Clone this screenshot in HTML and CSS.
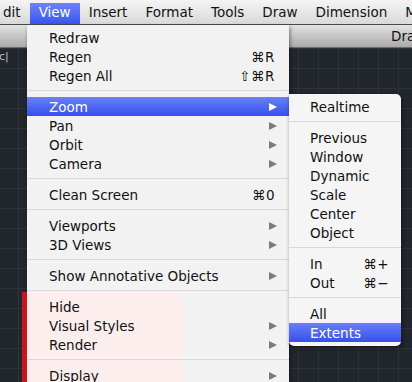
FILE: index.html
```html
<!DOCTYPE html>
<html lang="en">
<head>
    <meta charset="UTF-8">
    <meta name="viewport" content="width=device-width, initial-scale=1.0">
    <title>View Menu</title>
    <link rel="stylesheet" href="styles.css">
</head>
<body>
    <div class="menubar">
        <span class="mb-item first">dit</span>
        <span class="mb-item active">View</span>
        <span class="mb-item">Insert</span>
        <span class="mb-item">Format</span>
        <span class="mb-item">Tools</span>
        <span class="mb-item">Draw</span>
        <span class="mb-item">Dimension</span>
        <span class="mb-item">M</span>
    </div>
    <div class="titlebar"><span class="title">Dra</span></div>
    <div class="canvas"><span class="canvas-label">c|</span></div>

    <div class="menu main-menu">
        <div class="tint"></div>
        <div class="row">Redraw</div>
        <div class="row">Regen <span class="key">⌘R</span></div>
        <div class="row">Regen All <span class="key">⇧⌘R</span></div>
        <div class="sep"></div>
        <div class="row selected">Zoom <span class="arrow"></span></div>
        <div class="row">Pan <span class="arrow"></span></div>
        <div class="row">Orbit <span class="arrow"></span></div>
        <div class="row">Camera <span class="arrow"></span></div>
        <div class="sep"></div>
        <div class="row">Clean Screen <span class="key">⌘0</span></div>
        <div class="sep"></div>
        <div class="row">Viewports <span class="arrow"></span></div>
        <div class="row">3D Views <span class="arrow"></span></div>
        <div class="sep"></div>
        <div class="row">Show Annotative Objects <span class="arrow"></span></div>
        <div class="sep"></div>
        <div class="row">Hide</div>
        <div class="row">Visual Styles <span class="arrow"></span></div>
        <div class="row">Render <span class="arrow"></span></div>
        <div class="sep"></div>
        <div class="row">Display <span class="arrow"></span></div>
    </div>
    <div class="mark"></div>

    <div class="menu sub-menu">
        <div class="row">Realtime</div>
        <div class="sep"></div>
        <div class="row">Previous</div>
        <div class="row">Window</div>
        <div class="row">Dynamic</div>
        <div class="row">Scale</div>
        <div class="row">Center</div>
        <div class="row">Object</div>
        <div class="sep"></div>
        <div class="row">In <span class="key">⌘+</span></div>
        <div class="row">Out <span class="key">⌘−</span></div>
        <div class="sep"></div>
        <div class="row">All</div>
        <div class="row selected">Extents</div>
    </div>
</body>
</html>
```

FILE: styles.css
```css
body {
    margin: 0;
    width: 412px;
    height: 382px;
    overflow: hidden;
    position: relative;
    font-family: "DejaVu Sans", sans-serif;
    font-size: 13.5px;
    color: #111;
    background: #22262d;
}
.menubar {
    display: flex;
    height: 24px;
    align-items: stretch;
    white-space: nowrap;
    overflow: hidden;
    background: linear-gradient(#f4f4f4, #d9d9d9);
    border-bottom: 1px solid #4a4a4a;
}
.mb-item {
    display: flex;
    align-items: center;
    padding: 0 9px;
    margin-top: 3px;
    padding-bottom: 3px;
}
.mb-item.first {
    padding-left: 3px;
}
.mb-item.active {
    color: white;
    background: linear-gradient(#6d84f7, #3a55ee);
}
.titlebar {
    height: 22px;
    display: flex;
    align-items: center;
    padding-left: 391px;
    white-space: nowrap;
    background: linear-gradient(#e2e2e2, #aaaaaa);
    border-bottom: 1px solid #6b6b6b;
}
.canvas {
    height: 334px;
    background-color: #22262d;
    background-image:
        linear-gradient(90deg, rgba(255,255,255,0.05) 1px, transparent 1px),
        linear-gradient(rgba(255,255,255,0.05) 1px, transparent 1px);
    background-size: 20px 20px;
    background-position: 18px 0;
}
.canvas-label {
    display: block;
    color: #b8bcc4;
    font-size: 11px;
    padding-top: 2px;
    margin-left: -1px;
}
.menu {
    position: absolute;
    background: #f2f2f2;
    padding: 3px 0;
    box-shadow: 1px 2px 4px rgba(0, 0, 0, 0.45);
}
.main-menu {
    left: 27px;
    top: 25px;
    width: 262px;
    height: 400px;
}
.sub-menu {
    left: 289px;
    top: 94px;
    width: 112px;
    padding-bottom: 4px;
    border-radius: 0 5px 5px 5px;
    background: #f5f5f5;
    z-index: 2;
}
.row {
    position: relative;
    display: flex;
    align-items: center;
    justify-content: space-between;
    height: 19px;
    padding: 0 14px 0 22px;
    white-space: nowrap;
}
.sub-menu .row {
    padding: 0 12px 0 21px;
}
.row.selected {
    color: white;
    background: linear-gradient(#6a80f6, #344fec);
}
.sep {
    position: relative;
    height: 1px;
    margin: 5px 0 6px;
    background: #d9d9d9;
}
.key {
    letter-spacing: 0.5px;
}
.arrow {
    width: 0;
    height: 0;
    margin-right: -2px;
    border-top: 4.5px solid transparent;
    border-bottom: 4.5px solid transparent;
    border-left: 8px solid #7b7b7b;
}
.selected .arrow {
    border-left-color: white;
}
.tint {
    position: absolute;
    left: 0;
    top: 267px;
    width: 155px;
    height: 140px;
    background: #fdeeee;
}
.mark {
    position: absolute;
    left: 22px;
    top: 292px;
    width: 5px;
    height: 100px;
    background: #c8161d;
}
```
